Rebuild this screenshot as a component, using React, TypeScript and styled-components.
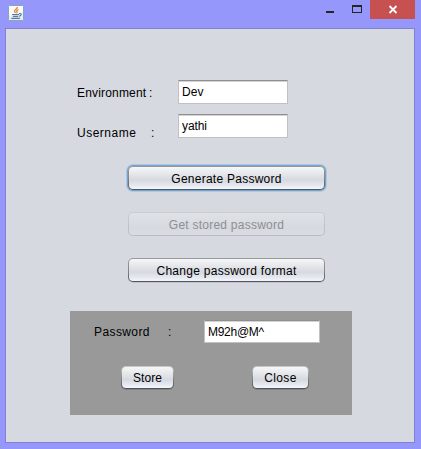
import React from "react";
import styled, { createGlobalStyle, css } from "styled-components";

const GlobalStyle = createGlobalStyle`
  * { box-sizing: border-box; }
  body { margin: 0; overflow: hidden; }
`;

const Window = styled.div`
  width: 421px;
  height: 449px;
  padding: 0 6px 6px 5px;
  background: #9598fa;
  font: 12px/14px "Liberation Sans", Arial, sans-serif;
  color: #000;
`;

const TitleBar = styled.header`
  display: flex;
  justify-content: space-between;
  align-items: flex-start;
  height: 28px;
`;

const AppIcon = styled.svg`
  display: block;
  width: 16px;
  height: 16px;
  margin: 5px 0 0 3px;
`;

const WindowControls = styled.div`
  display: flex;
`;

const ControlButton = styled.button<{ $w: number; $danger?: boolean }>`
  width: ${(p) => p.$w}px;
  height: 19px;
  padding: 0;
  border: 0;
  background: ${(p) => (p.$danger ? "#c75050" : "transparent")};

  svg {
    display: block;
  }
`;

const Content = styled.main`
  display: flex;
  flex-direction: column;
  width: 410px;
  height: 415px;
  border: 1px solid #7f81d1;
  background: #d6d9e0;
`;

const Form = styled.div`
  display: flex;
  flex-direction: column;
  gap: 10px;
  padding: 51px 0 0 71px;
`;

const Row = styled.div`
  display: flex;
  height: 24px;
`;

const Label = styled.label<{ $w: number; $top: number; $spacing: number }>`
  width: ${(p) => p.$w}px;
  padding-top: ${(p) => p.$top}px;
  letter-spacing: ${(p) => p.$spacing}px;
  white-space: pre;
`;

const Field = styled.input<{ $w: number; $h: number; $spacing?: number }>`
  width: ${(p) => p.$w}px;
  height: ${(p) => p.$h}px;
  padding: 0 0 0 3px;
  border: 1px solid #c0c1c4;
  border-top-color: #8d8e8f;
  border-radius: 0;
  outline: 0;
  background: linear-gradient(#d4d4d4 0 1px, #fff 1px);
  font: inherit;
  color: inherit;
  letter-spacing: ${(p) => p.$spacing ?? 0}px;
`;

const Actions = styled.div`
  display: flex;
  flex-direction: column;
  gap: 22px;
  padding: 28px 0 0 122px;
`;

const Button = styled.button<{ $w: number; $h: number; $focused?: boolean; $spacing: number }>`
  width: ${(p) => p.$w}px;
  height: ${(p) => p.$h}px;
  padding: 1px 0 0;
  border: 1px solid transparent;
  border-radius: 5px;
  background:
    linear-gradient(#f6f7f8, #e3e5e9 35%, #d6d9df 60%, #e6e9f0 85%, #f2f6fd) padding-box,
    linear-gradient(#989a9e, #85878b 50%, #505357) border-box;
  font: inherit;
  color: #000;
  letter-spacing: ${(p) => p.$spacing}px;
  box-shadow: 0 1px 0 rgba(80, 84, 88, 0.14);

  ${(p) =>
    p.$focused &&
    css`
      box-shadow: 0 0 0 1px #73a4d1, 0 0 0 2px rgba(115, 164, 209, 0.35);
    `}

  &:disabled {
    color: #8e8f91;
    box-shadow: none;
    background:
      linear-gradient(#dfe2e6, #d8dbe1 50%, #d6d9df 70%, #dadde4) padding-box,
      linear-gradient(#c9ccd1, #b9bcc2) border-box;
  }
`;

const ResultPanel = styled.section`
  width: 282px;
  height: 104px;
  margin: 29px 0 0 64px;
  background: #999;
`;

const ResultRow = styled.div`
  display: flex;
  padding: 9px 0 0 24px;
`;

const ResultButtons = styled.div`
  display: flex;
  gap: 78px;
  padding: 23px 0 0 51px;
`;

const PanelButton = styled(Button)`
  background:
    linear-gradient(#f6f7f8, #e3e5e9 35%, #d6d9df 60%, #e6e9f0 85%, #f2f6fd) padding-box,
    linear-gradient(#c8c9cb, #8a8c8f 50%, #4d5054) border-box;
  box-shadow: 0 1px 0 rgba(60, 64, 68, 0.25);
`;

export default function App() {
  return (
    <Window>
      <GlobalStyle />
      <TitleBar>
        <AppIcon viewBox="0 0 16 16" aria-label="Java">
          <rect x="0.5" y="0.5" width="15" height="15" rx="1" fill="#e6edf2" stroke="#8ba4b8" />
          <path d="M1 1h14v6L1 11z" fill="#fafbfb" />
          <path d="M9.3 2C9.5 4 6 4.8 6.5 6.4c.2.7.8.9 1 1.6M10.5 4.6C8.3 5.3 8.5 6 9 6.8c.2.5 0 1-.5 1.3" fill="none" stroke="#e98536" strokeWidth="1.3" />
          <path d="M4 9.5h7M5 11.4h5M3.3 13.4h8.7" fill="none" stroke="#54809f" strokeWidth="1.1" />
          <path d="M11 8.5c3.4-.5 2.5 2.4-.3 2.7" fill="none" stroke="#54809f" strokeWidth="1.1" />
        </AppIcon>
        <WindowControls>
          <ControlButton $w={26} aria-label="Minimize">
            <svg width="26" height="19" shapeRendering="crispEdges">
              <rect x="7" y="11" width="8" height="2" fill="#252525" />
            </svg>
          </ControlButton>
          <ControlButton $w={25} aria-label="Maximize">
            <svg width="25" height="19" shapeRendering="crispEdges">
              <path d="M7 5h10v8H7zM8 7v5h8V7z" fill="#252525" fillRule="evenodd" />
            </svg>
          </ControlButton>
          <ControlButton $w={45} $danger aria-label="Close window">
            <svg width="45" height="19">
              <path d="M19.5 6l7 7M26.5 6l-7 7" stroke="#fff" strokeWidth="1.8" />
            </svg>
          </ControlButton>
        </WindowControls>
      </TitleBar>
      <Content>
        <Form>
          <Row>
            <Label $w={72} $top={6} $spacing={0.18}>Environment</Label>
            <Label $w={29} $top={6} $spacing={0}>:</Label>
            <Field $w={110} $h={24} $spacing={0.1} defaultValue="Dev" />
          </Row>
          <Row>
            <Label $w={74} $top={12} $spacing={0.5}>Username</Label>
            <Label $w={27} $top={12} $spacing={0}>:</Label>
            <Field $w={110} $h={24} $spacing={-0.1} defaultValue="yathi" />
          </Row>
        </Form>
        <Actions>
          <Button $w={197} $h={24} $spacing={0.25} $focused>Generate Password</Button>
          <Button $w={197} $h={24} $spacing={0.24} disabled>Get stored password</Button>
          <Button $w={197} $h={24} $spacing={0.27}>Change password format</Button>
        </Actions>
        <ResultPanel>
          <ResultRow>
            <Label $w={74} $top={5} $spacing={0.4}>Password</Label>
            <Label $w={36} $top={5} $spacing={0}>:</Label>
            <Field $w={116} $h={23} $spacing={-0.28} defaultValue="M92h@M^" />
          </ResultRow>
          <ResultButtons>
            <PanelButton $w={53} $h={23} $spacing={0.05}>Store</PanelButton>
            <PanelButton $w={57} $h={23} $spacing={0.35}>Close</PanelButton>
          </ResultButtons>
        </ResultPanel>
      </Content>
    </Window>
  );
}
